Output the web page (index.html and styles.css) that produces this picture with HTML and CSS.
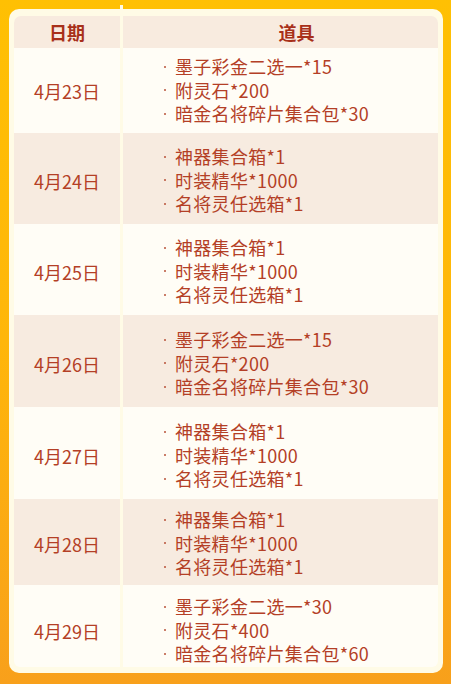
FILE: index.html
```html
<!DOCTYPE html>
<html lang="zh">
<head>
<meta charset="utf-8">
<link rel="stylesheet" href="styles.css">
</head>
<body>
<div class="page">
  <div class="card">
    <div class="table">
      <div class="row head">
        <div class="hc hc-date">日期</div>
        <div class="hc hc-items">道具</div>
      </div>

      <div class="row r1 light">
        <div class="date">4月23日</div>
        <ul class="items"><li>墨子彩金二选一*15</li><li>附灵石*200</li><li>暗金名将碎片集合包*30</li></ul>
      </div>
      <div class="row r2 tint">
        <div class="date">4月24日</div>
        <ul class="items"><li>神器集合箱*1</li><li>时装精华*1000</li><li>名将灵任选箱*1</li></ul>
      </div>
      <div class="row r3 light">
        <div class="date">4月25日</div>
        <ul class="items"><li>神器集合箱*1</li><li>时装精华*1000</li><li>名将灵任选箱*1</li></ul>
      </div>
      <div class="row r4 tint">
        <div class="date">4月26日</div>
        <ul class="items"><li>墨子彩金二选一*15</li><li>附灵石*200</li><li>暗金名将碎片集合包*30</li></ul>
      </div>
      <div class="row r5 light">
        <div class="date">4月27日</div>
        <ul class="items"><li>神器集合箱*1</li><li>时装精华*1000</li><li>名将灵任选箱*1</li></ul>
      </div>
      <div class="row r6 tint">
        <div class="date">4月28日</div>
        <ul class="items"><li>神器集合箱*1</li><li>时装精华*1000</li><li>名将灵任选箱*1</li></ul>
      </div>
      <div class="row r7 light last">
        <div class="date">4月29日</div>
        <ul class="items"><li>墨子彩金二选一*30</li><li>附灵石*400</li><li>暗金名将碎片集合包*60</li></ul>
      </div>
    </div>
  </div>
</div>
</body>
</html>
```

FILE: styles.css
```css
html, body {
  margin: 0;
  padding: 0;
}

body {
  font-family: "Noto Sans CJK SC", "Noto Sans", sans-serif;
  color: #b43f26;
}

.page {
  width: 451px;
  height: 684px;
  padding: 9px 8px 11px 9px;
  box-sizing: border-box;
  background: linear-gradient(to bottom, #ffc003 0%, #ffb60a 50%, #f8a01b 100%);
  overflow: hidden;
}

.card {
  position: relative;
  width: 434px;
  height: 664px;
  box-sizing: border-box;
  padding: 7px 5px 5px 5px;
  background: #fffbe6;
  border-radius: 10px;
}

.card::before {
  content: "";
  position: absolute;
  left: 111px;
  top: -4px;
  width: 3px;
  height: 5px;
  background: #fffbe6;
}

.table {
  display: flex;
  flex-direction: column;
}

.row {
  display: grid;
  grid-template-columns: 106px 315px;
  column-gap: 3px;
}

.head {
  height: 32px;
}

.hc {
  background: #f8ebdf;
  font-size: 18px;
  font-weight: 700;
  line-height: 32px;
  color: #a8301a;
  text-align: center;
}

.hc-date {
  border-top-left-radius: 7px;
}

.hc-items {
  border-top-right-radius: 7px;
  padding-left: 32px;
}

.tint .date,
.tint .items {
  background: #f7ebe0;
}

.light .date,
.light .items {
  background: #fffdf6;
}

.last .date {
  border-bottom-left-radius: 6px;
}

.last .items {
  border-bottom-right-radius: 6px;
}

.date {
  box-sizing: border-box;
  padding-top: var(--pt);
  font-size: 18px;
  line-height: 72px;
  text-align: center;
}

.items {
  list-style: none;
  margin: 0;
  box-sizing: border-box;
  padding: var(--pt) 0 0 36px;
  font-size: 18px;
  line-height: 23.6px;
  letter-spacing: 0.3px;
}

.items li {
  display: flex;
  align-items: center;
  white-space: nowrap;
}

.items li::before {
  content: "";
  width: 2px;
  height: 2px;
  border-radius: 50%;
  background: #b8523a;
  margin: 0 9px 0 5px;
  flex: none;
}

.r1 { height: 85px; --pt: 7px; }
.r2 { height: 91px; --pt: 12px; }
.r3 { height: 91px; --pt: 12px; }
.r4 { height: 92px; --pt: 13px; }
.r5 { height: 92px; --pt: 13px; }
.r6 { height: 86px; --pt: 9px; }
.r7 { height: 81px; --pt: 10px; }
```
